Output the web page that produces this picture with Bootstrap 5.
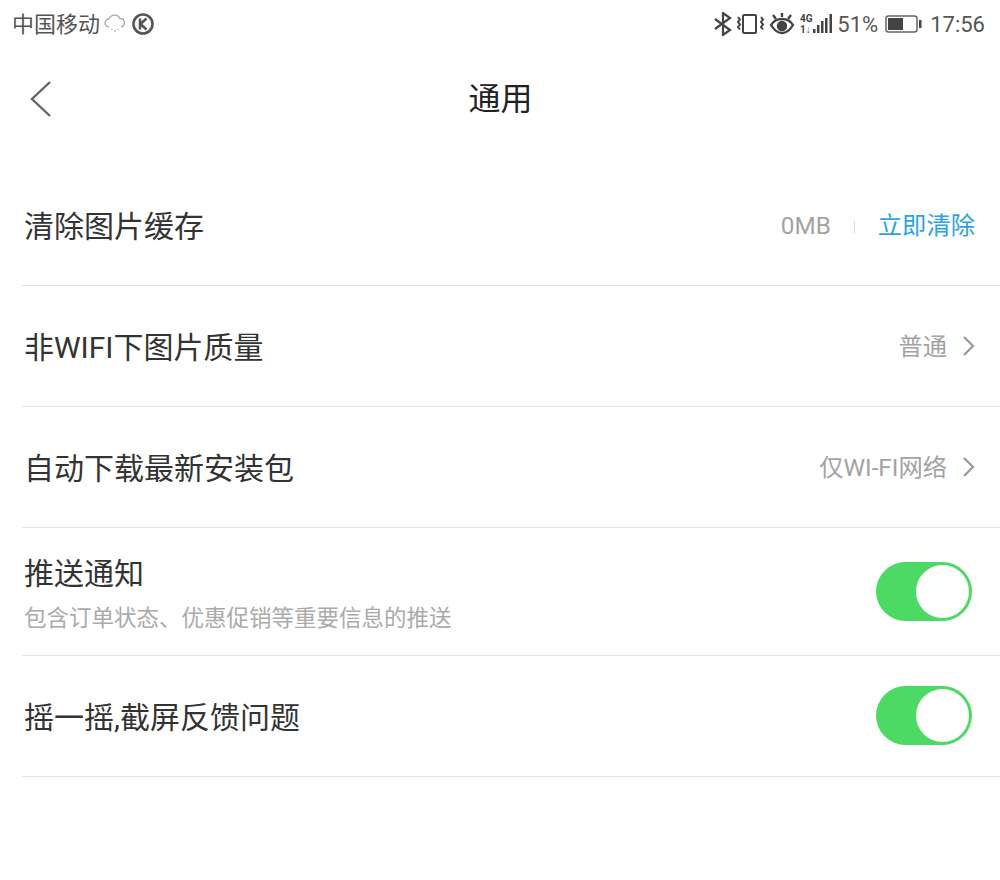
<!DOCTYPE html>
<html lang="zh">
<head>
  <meta charset="UTF-8">
  <title>通用</title>
  <link href="https://cdn.jsdelivr.net/npm/bootstrap@5.3.0/dist/css/bootstrap.min.css" rel="stylesheet">
  <style>
    body { font-family: "Roboto", "Noto Sans CJK SC", sans-serif; background: #fff; color: #333; width: 1000px; height: 880px; overflow: hidden; }
    .status-bar { height: 48px; padding: 0 15px 0 12px; color: #555; font-size: 22px; }
    .status-bar svg { display: block; }
    .k-icon { margin-left: 5px; }
    .ic-vib { margin-left: 2px; }
    .ic-net { margin-left: 5px; }
    .ic-bat { margin-left: 7px; }
    .title-bar { height: 102px; padding: 0 0 0 28px; }
    .page-title { font-size: 32px; color: #222; line-height: 1; margin: 0; font-weight: 400; }
    .title-gap { width: 29px; }
    .settings { margin-top: 15px; padding-left: 22px; }
    .set-row { height: 121px; border-bottom: 1px solid #e3e3e3; padding: 0 28px 0 2px; }
    .set-row.tall { height: 128px; }
    .set-name { font-size: 30px; line-height: 1.2; color: #333; }
    .one-line { margin-top: 3px; }
    .two-line { padding-top: 5px; }
    .set-desc { font-size: 22.5px; line-height: 1.2; color: #aaa; margin-top: 13px; }
    .set-val { font-size: 24.3px; color: #a3a3a3; margin-top: 3px; }
    .set-act { font-size: 24.3px; color: #2ba3dc; margin-right: -3px; margin-top: 3px; }
    .v-sep { width: 1px; height: 12px; background: #ddd; margin: 3px 23px 0; }
    .chev { margin-left: 15px; margin-right: -4px; }
    .sw { width: 96px; height: 59px; border-radius: 30px; background: #4cd964; position: relative; flex: none; }
    .sw::after { content: ""; position: absolute; right: 3px; top: 3px; width: 53px; height: 53px; border-radius: 50%; background: #fff; }
    .sw-up { margin-top: -2px; }
    .net-type { font: 700 10px "Roboto", sans-serif; fill: #444; }
  </style>
</head>
<body>
  <div class="status-bar d-flex align-items-center justify-content-between">
    <div class="d-flex align-items-center">
      <span>中国移动</span>
      <svg class="ms-1" width="22" height="20" viewBox="0 0 22 20" fill="none" stroke="#aaa" stroke-width="1.3"><path d="M5 13a4 4 0 0 1 0-8 6 6 0 0 1 11-.5A4.300 4.300 0 0 1 17 13"/><path d="M8 15v1M11 16v2M14 15v1"/></svg>
      <svg class="k-icon" width="24" height="24" viewBox="0 0 24 24" fill="none" stroke="#555"><circle cx="12" cy="12" r="9.500" stroke-width="2.600"/><path d="M9 6.500v11M15.500 6.500 9.500 12l6 5.500" stroke-width="2.600"/></svg>
    </div>
    <div class="d-flex align-items-center">
      <svg width="20" height="24" viewBox="0 0 20 24" fill="none" stroke="#444" stroke-width="2.200"><path d="M2 7l15 11-7 5V1l7 5L2 17"/></svg>
      <svg class="ic-vib" width="30" height="24" viewBox="0 0 30 24" fill="none" stroke="#444" stroke-width="2"><rect x="8" y="3" width="13" height="18" rx="1"/><path d="M3 5l2 2.500-2 2.500 2 2.500-2 2.500 2 2.500M26 5l2 2.500-2 2.500 2 2.500-2 2.500 2 2.500"/></svg>
      <svg class="ms-1" width="26" height="24" viewBox="0 0 26 24" fill="none" stroke="#444" stroke-width="2.400"><path d="M2 13c3-5 7-6 11-6s8 1 11 6c-3 5-7 8-11 8s-8-3-11-8z"/><circle cx="13" cy="14" r="4" fill="#444"/><path d="M4 3l3 4M22 3l-3 4M13 1v4"/></svg>
      <svg class="ic-net" width="33" height="24" viewBox="0 0 33 24" fill="#444"><text class="net-type" x="0" y="10">4G</text><text class="net-type" x="0" y="21">1↓</text><rect x="13" y="17" width="2.500" height="4"/><rect x="17" y="13" width="2.500" height="8"/><rect x="21" y="9" width="2.500" height="12"/><rect x="25" y="6" width="2.500" height="15"/><rect x="29.500" y="2" width="2.500" height="19"/></svg>
      <span class="ms-1">51%</span>
      <svg class="ic-bat" width="37" height="20" viewBox="0 0 37 20"><rect x="1" y="2" width="31" height="16" rx="2.500" fill="none" stroke="#666" stroke-width="1.500"/><rect x="3" y="4" width="15" height="12" fill="#444"/><rect x="34" y="6" width="2.500" height="8" fill="#444"/></svg>
      <span class="ms-2">17:56</span>
    </div>
  </div>

  <div class="title-bar d-flex align-items-center justify-content-between">
    <svg width="26" height="38" viewBox="0 0 26 38" fill="none" stroke="#666" stroke-width="2.400"><path d="M22 2 4 19l18 17"/></svg>
    <h1 class="page-title">通用</h1>
    <span class="title-gap me-4"></span>
  </div>

  <div class="settings">
    <div class="set-row d-flex align-items-center justify-content-between">
      <span class="set-name one-line">清除图片缓存</span>
      <div class="d-flex align-items-center">
        <span class="set-val">0MB</span>
        <span class="v-sep"></span>
        <span class="set-act">立即清除</span>
      </div>
    </div>
    <div class="set-row d-flex align-items-center justify-content-between">
      <span class="set-name one-line">非WIFI下图片质量</span>
      <div class="d-flex align-items-center">
        <span class="set-val">普通</span>
        <svg class="chev" width="14" height="22" viewBox="0 0 14 22" fill="none" stroke="#999" stroke-width="2.200"><path d="M2 2l9 9-9 9"/></svg>
      </div>
    </div>
    <div class="set-row d-flex align-items-center justify-content-between">
      <span class="set-name one-line">自动下载最新安装包</span>
      <div class="d-flex align-items-center">
        <span class="set-val">仅WI-FI网络</span>
        <svg class="chev" width="14" height="22" viewBox="0 0 14 22" fill="none" stroke="#999" stroke-width="2.200"><path d="M2 2l9 9-9 9"/></svg>
      </div>
    </div>
    <div class="set-row tall d-flex align-items-center justify-content-between">
      <div class="two-line">
        <div class="set-name">推送通知</div>
        <div class="set-desc">包含订单状态、优惠促销等重要信息的推送</div>
      </div>
      <span class="sw"></span>
    </div>
    <div class="set-row d-flex align-items-center justify-content-between">
      <span class="set-name one-line">摇一摇,截屏反馈问题</span>
      <span class="sw sw-up"></span>
    </div>
  </div>
  <script src="https://cdn.jsdelivr.net/npm/bootstrap@5.3.0/dist/js/bootstrap.bundle.min.js"></script>
</body>
</html>
